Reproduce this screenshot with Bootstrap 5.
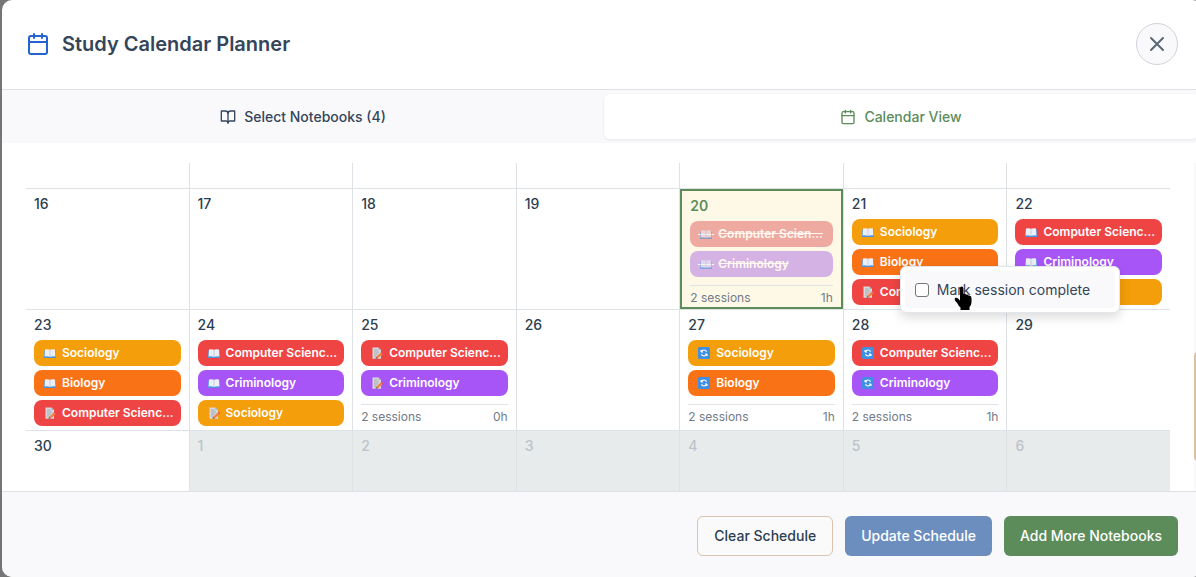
<!DOCTYPE html>
<html lang="en">
<head>
<meta charset="utf-8">
<meta name="viewport" content="width=device-width, initial-scale=1">
<title>Study Calendar Planner</title>
<link href="https://cdn.jsdelivr.net/npm/bootstrap@5.3.0/dist/css/bootstrap.min.css" rel="stylesheet">
<style>
  body { font-family: Inter, "Liberation Sans", sans-serif; background: #757575; color: #2c3e50; font-size: 14px; line-height: 20px; }
  .planner { height: 100vh; margin: 0 -6px 0 2px; border-radius: 10px; background: #fff; }
  .planner-head { padding: 23px 24px 24px; border-bottom: 1px solid #dee0e5; }
  .planner-head h1 { font-size: 20px; line-height: 28px; font-weight: 600; color: #34455a; }
  .close-btn { width: 42px; height: 42px; border: 1px solid #cfd3d9; background: #f9f9fb; color: #5b6777; }
  .tab-strip { background: #f9f9fb; gap: 4px; }
  .tab-btn { height: 45px; border: 0; border-radius: 6px; background: transparent; color: #34455a; font-weight: 500; gap: 8px; flex: 1 1 0; }
  .tab-btn.active { background: #fff; color: #5b8c5a; box-shadow: 0 1px 3px rgba(0,0,0,.08); }
  .cal-body { margin-top: 20px; padding-left: 24px; gap: 24px; min-height: 0; }
  .cal-grid { display: grid; grid-template-columns: repeat(7, minmax(0, 1fr)); grid-template-rows: 25px repeat(3, 120px); gap: 1px; background: #dee2e6; min-width: 0; }
  .day { position: relative; background: #fff; padding: 8px 8px 4px; }
  .day-num { font-weight: 500; line-height: 14px; margin-bottom: 8px; }
  .day.today { background: #fef9e7; border: 2px solid #5b8c5a; }
  .day.today .day-num { color: #5b8c5a; font-weight: 600; }
  .day.outside { background: #e8ebec; }
  .day.outside .day-num { color: #bcc3ca; }
  .chip { display: flex; align-items: center; height: 26px; border-radius: 8px; padding: 0 6px 0 10px; color: #fff; font-size: 12px; font-weight: 600; line-height: 16px; margin-bottom: 4px; white-space: nowrap; }
  .chip svg { flex: none; width: 12px; height: 12px; margin-right: 6px; }
  .soc { background: #f59e0b; } .bio { background: #f97316; } .comp { background: #ef4444; } .crim { background: #a855f7; }
  .done { position: relative; color: #fef8f0; text-decoration: line-through; }
  .done.comp { background: #eeaaa1; }
  .done.crim { background: #d4b2e3; }
  .done svg { opacity: .6; }
  .done::before { content: ""; position: absolute; left: 8px; width: 16px; top: 13px; height: 1px; background: #fef8f0; }
  .totals { margin-top: 8px; padding-top: 4px; border-top: 1px solid #dfe2e7; font-size: 12px; line-height: 16px; color: #717b88; }
  .track { flex: none; width: 8px; background: #f9f9fb; }
  .thumb { margin-top: 189px; height: 109px; border-radius: 4px; background: #dcc0a2; }
  .ctx-menu { position: absolute; left: 56px; top: 77px; z-index: 5; width: 220px; padding: 4px; border: 1px solid #e3e6ea; border-radius: 6px; background: #fff; box-shadow: 0 4px 12px rgba(0,0,0,.15); }
  .ctx-menu label { display: flex; align-items: center; height: 37px; padding: 0 10px; border-radius: 4px; background: #f9f9fb; gap: 8px; color: #34455a; white-space: nowrap; }
  .ctx-menu input { appearance: none; width: 14px; height: 14px; margin: 0; border: 1px solid #767676; border-radius: 3px; background: #fff; }
  .pointer { position: absolute; left: 52px; top: 18px; width: 20px; height: 26px; pointer-events: none; }
  .planner-foot { border-top: 1px solid #dee0e5; background: #f9f9fb; padding: 24px 24px 21px; gap: 12px; border-radius: 0 0 10px 10px; }
  .planner-foot .btn { height: 40px; padding: 0 16px; border: 0; border-radius: 6px; font-size: 14px; line-height: 20px; font-weight: 500; }
  .planner-foot .btn-clear { border: 1px solid #d8c2b0; color: #2c3e50; background: #fbfafb; }
  .planner-foot .btn-update { background: #6c8ebf; color: #fff; }
  .planner-foot .btn-add { background: #5b8c5a; color: #fff; }
</style>
</head>
<body class="overflow-hidden">
<svg class="d-none" aria-hidden="true">
  <symbol id="i-cal" viewBox="0 0 24 24"><g fill="none" stroke="currentColor" stroke-width="2" stroke-linecap="round" stroke-linejoin="round"><path d="M8 2v4M16 2v4M3 10h18"/><rect x="3" y="4" width="18" height="18" rx="2"/></g></symbol>
  <symbol id="i-open" viewBox="0 0 24 24"><g fill="none" stroke="currentColor" stroke-width="2" stroke-linecap="round" stroke-linejoin="round"><path d="M12 7v14"/><path d="M2 3h6a4 4 0 0 1 4 4 4 4 0 0 1 4-4h6v15h-7a3 3 0 0 0-3 3 3 3 0 0 0-3-3H2z"/></g></symbol>
  <symbol id="i-book" viewBox="0 0 12 12"><path d="M.3 3.200h11.400l.3 7.800H0z" fill="#4c94e0"/><path d="M1 2.400Q4 1.800 6 2.800 8 1.800 11 2.400L11.400 9.400Q8.500 9 6 9.800 3.500 9 .6 9.400z" fill="#eceff6"/><path d="M6 2.800v7" stroke="#b9c5d6" stroke-width=".7"/></symbol>
  <symbol id="i-memo" viewBox="0 0 12 12"><path d="M1.500.5h6L10 3v8.800H1.500z" fill="#d5d8dc"/><path d="M7.500.5V3H10z" fill="#a8adb4"/><path d="M3 3h3.500M3 5h5M3 7h4M3 9h2.500" stroke="#9aa0a8" stroke-width=".8"/><path d="M5 10 9.700 5.400 11.600 7.200 7 11.300z" fill="#f5813f"/><path d="m9.700 5.400 1-1L12 6.200l-.4 1z" fill="#e2506a"/><path d="m5 10-.5 1.700 2.500-.4z" fill="#6b4b3a"/></symbol>
  <symbol id="i-sync" viewBox="0 0 12 12"><rect width="12" height="12" rx="1.500" fill="#3f8fe4"/><path d="M3 5V3M3 5H5M3.300 4.800A2.900 2.900 0 0 1 8.600 4.700M9 7V9M9 7H7M8.700 7.200A2.900 2.900 0 0 1 3.400 7.300" fill="none" stroke="#fff" stroke-width="1.100"/></symbol>
</svg>

<main class="planner d-flex flex-column overflow-hidden">
  <header class="planner-head d-flex align-items-center justify-content-between">
    <div class="d-flex align-items-center gap-2">
      <svg width="24" height="24" color="#2563d0" class="me-1"><use href="#i-cal"/></svg>
      <h1 class="m-0">Study Calendar Planner</h1>
    </div>
    <button type="button" class="close-btn rounded-circle d-flex align-items-center justify-content-center p-0" aria-label="Close">
      <svg width="20" height="20" viewBox="0 0 20 20" fill="none" stroke="currentColor" stroke-width="2" stroke-linecap="round"><path d="M4 4 16 16M16 4 4 16"/></svg>
    </button>
  </header>

  <nav class="tab-strip d-flex p-1">
    <button type="button" class="tab-btn d-flex align-items-center justify-content-center"><svg width="16" height="16"><use href="#i-open"/></svg>Select Notebooks (4)</button>
    <button type="button" class="tab-btn active d-flex align-items-center justify-content-center"><svg width="16" height="16"><use href="#i-cal"/></svg>Calendar View</button>
  </nav>

  <section class="cal-body d-flex flex-grow-1 overflow-hidden">
    <div class="cal-grid flex-grow-1 align-self-start">
      <div class="day"></div><div class="day"></div><div class="day"></div><div class="day"></div><div class="day"></div><div class="day"></div><div class="day"></div>

      <div class="day"><div class="day-num">16</div></div>
      <div class="day"><div class="day-num">17</div></div>
      <div class="day"><div class="day-num">18</div></div>
      <div class="day"><div class="day-num">19</div></div>
      <div class="day today"><div class="day-num">20</div>
        <div class="chip comp done"><svg><use href="#i-book"/></svg><span>Computer Scien...</span></div>
        <div class="chip crim done"><svg><use href="#i-book"/></svg><span>Criminology</span></div>
        <div class="totals d-flex justify-content-between"><span>2 sessions</span><span>1h</span></div>
      </div>
      <div class="day"><div class="day-num">21</div>
        <div class="chip soc"><svg><use href="#i-book"/></svg><span>Sociology</span></div>
        <div class="chip bio"><svg><use href="#i-book"/></svg><span>Biology</span></div>
        <div class="chip comp"><svg><use href="#i-memo"/></svg><span>Computer Scienc...</span></div>
        <div class="ctx-menu">
          <label for="mark-done"><input type="checkbox" id="mark-done">Mark session complete</label>
          <svg class="pointer" viewBox="0 0 20 26"><path d="M7 3.500Q7 1.500 8.700 1.500T10.400 3.500V9Q12 8.300 13 9.500 14.600 9 15.500 10.500 18.500 10 18.500 13V17Q18.500 20 16.500 22V25H7.500V22.500Q5.500 21 4.500 18.500L2 15.500Q1 13.500 2.500 12.800 4 12.300 5.500 14L7 15.500z" fill="#000"/></svg>
        </div>
      </div>
      <div class="day"><div class="day-num">22</div>
        <div class="chip comp"><svg><use href="#i-book"/></svg><span>Computer Scienc...</span></div>
        <div class="chip crim"><svg><use href="#i-book"/></svg><span>Criminology</span></div>
        <div class="chip soc"></div>
      </div>

      <div class="day"><div class="day-num">23</div>
        <div class="chip soc"><svg><use href="#i-book"/></svg><span>Sociology</span></div>
        <div class="chip bio"><svg><use href="#i-book"/></svg><span>Biology</span></div>
        <div class="chip comp"><svg><use href="#i-memo"/></svg><span>Computer Scienc...</span></div>
      </div>
      <div class="day"><div class="day-num">24</div>
        <div class="chip comp"><svg><use href="#i-book"/></svg><span>Computer Scienc...</span></div>
        <div class="chip crim"><svg><use href="#i-book"/></svg><span>Criminology</span></div>
        <div class="chip soc"><svg><use href="#i-memo"/></svg><span>Sociology</span></div>
      </div>
      <div class="day"><div class="day-num">25</div>
        <div class="chip comp"><svg><use href="#i-memo"/></svg><span>Computer Scienc...</span></div>
        <div class="chip crim"><svg><use href="#i-memo"/></svg><span>Criminology</span></div>
        <div class="totals d-flex justify-content-between"><span>2 sessions</span><span>0h</span></div>
      </div>
      <div class="day"><div class="day-num">26</div></div>
      <div class="day"><div class="day-num">27</div>
        <div class="chip soc"><svg><use href="#i-sync"/></svg><span>Sociology</span></div>
        <div class="chip bio"><svg><use href="#i-sync"/></svg><span>Biology</span></div>
        <div class="totals d-flex justify-content-between"><span>2 sessions</span><span>1h</span></div>
      </div>
      <div class="day"><div class="day-num">28</div>
        <div class="chip comp"><svg><use href="#i-sync"/></svg><span>Computer Scienc...</span></div>
        <div class="chip crim"><svg><use href="#i-sync"/></svg><span>Criminology</span></div>
        <div class="totals d-flex justify-content-between"><span>2 sessions</span><span>1h</span></div>
      </div>
      <div class="day"><div class="day-num">29</div></div>

      <div class="day"><div class="day-num">30</div></div>
      <div class="day outside"><div class="day-num">1</div></div>
      <div class="day outside"><div class="day-num">2</div></div>
      <div class="day outside"><div class="day-num">3</div></div>
      <div class="day outside"><div class="day-num">4</div></div>
      <div class="day outside"><div class="day-num">5</div></div>
      <div class="day outside"><div class="day-num">6</div></div>
    </div>
    <div class="track"><div class="thumb"></div></div>
  </section>

  <footer class="planner-foot d-flex justify-content-end">
    <button type="button" class="btn btn-clear">Clear Schedule</button>
    <button type="button" class="btn btn-update">Update Schedule</button>
    <button type="button" class="btn btn-add">Add More Notebooks</button>
  </footer>
</main>
<script src="https://cdn.jsdelivr.net/npm/bootstrap@5.3.0/dist/js/bootstrap.bundle.min.js"></script>
</body>
</html>
